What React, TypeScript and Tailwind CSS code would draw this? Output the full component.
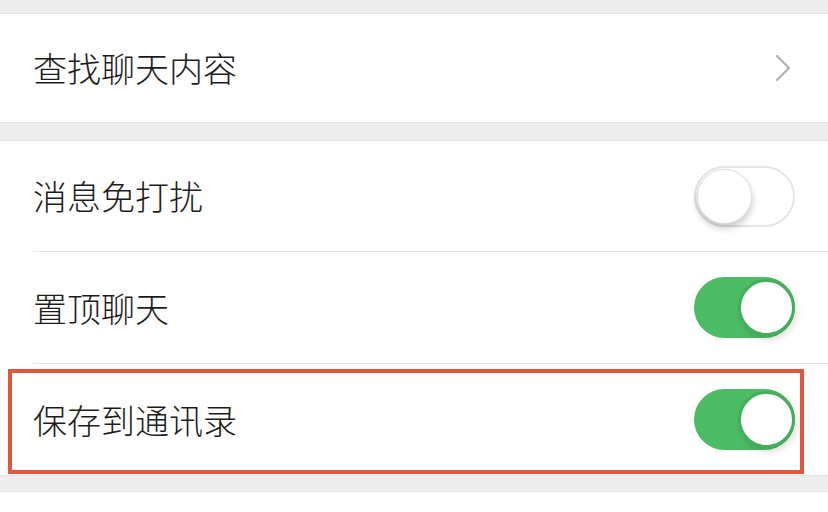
import React from 'react';

const font = { fontFamily: '"Noto Sans CJK SC", "Noto Sans", sans-serif' };

const Toggle = ({ on }: { on: boolean }) => {
  if (on) {
    return (
      <div className="flex h-[61px] w-[101px] items-center justify-end rounded-full bg-[#4cbb64]">
        <div className="h-[57px] w-[57px] rounded-full border-[3px] border-[#45ad5c] bg-white shadow-[2px_4px_6px_rgba(0,0,0,0.12)]" />
      </div>
    );
  }
  return (
    <div className="flex h-[61px] w-[101px] items-center rounded-full border-2 border-[#e4e4e4] bg-white pl-[1px]">
      <div className="h-[55px] w-[55px] rounded-full border border-[#dedede] bg-white shadow-[0_4px_7px_rgba(0,0,0,0.22)]" />
    </div>
  );
};

const Chevron = () => (
  <svg width="16" height="28" viewBox="0 0 16 28" fill="none">
    <path d="M2 2 L14 14 L2 26" stroke="#b3b3b3" strokeWidth="2.2" strokeLinecap="round" strokeLinejoin="round" />
  </svg>
);

const App = () => {
  return (
    <div className="h-[512px] w-[828px] overflow-hidden bg-[#ededed] pt-[14px] font-light text-[#1c1c1c]" style={font}>
      <div className="flex h-[108px] items-center justify-between bg-white pl-[33px] pr-[37px] shadow-[0_-1px_0_#e3e3e3,0_1px_0_#e3e3e3]">
        <span className="text-[34px] leading-none">查找聊天内容</span>
        <Chevron />
      </div>

      <div className="mt-[19px] bg-white shadow-[0_-1px_0_#e3e3e3,0_1px_0_#e3e3e3]">
        <div className="flex h-[110px] items-center justify-between pl-[33px] pr-[33px]">
          <span className="text-[34px] leading-none">消息免打扰</span>
          <Toggle on={false} />
        </div>
        <div className="ml-[33px] h-px bg-[#e6e6e6]" />
        <div className="flex h-[111px] items-center justify-between pl-[33px] pr-[33px]">
          <span className="text-[34px] leading-none">置顶聊天</span>
          <Toggle on />
        </div>
        <div className="ml-[33px] h-px bg-[#e6e6e6]" />
        <div className="relative flex h-[111px] items-center justify-between pl-[33px] pr-[33px]">
          <span className="text-[34px] leading-none">保存到通讯录</span>
          <Toggle on />
          <div className="absolute left-[8px] top-[5px] h-[105px] w-[796px] border-4 border-[#e2573a]" />
        </div>
      </div>

      <div className="mt-[17px] h-[40px] bg-white shadow-[0_-1px_0_#e3e3e3]" />
    </div>
  );
};

export default App;
